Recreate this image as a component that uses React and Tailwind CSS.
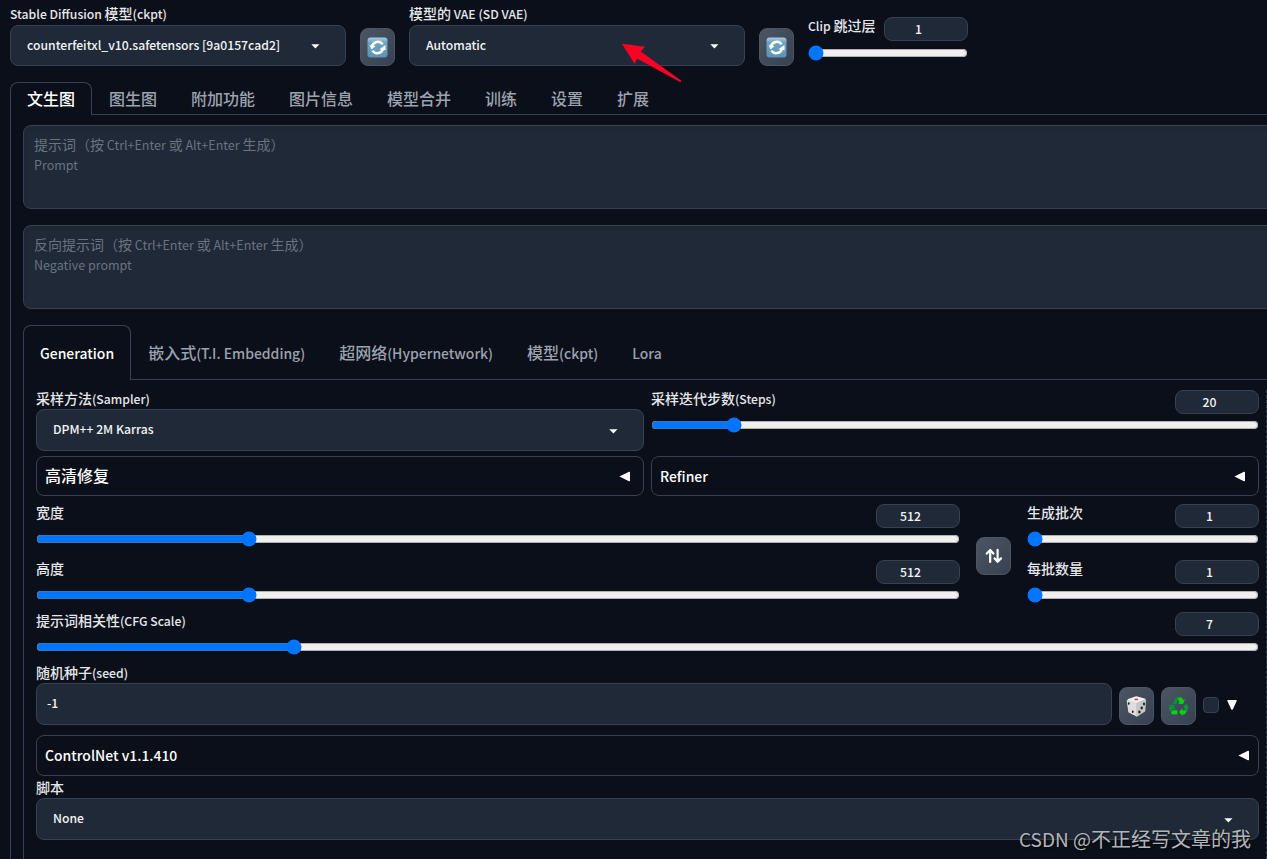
import React from "react";

// Latin runs are set slightly smaller than the surrounding Chinese glyphs.
function T({ children, latin = "text-[0.872em]" }) {
  return String(children)
    .split(/([\x20-\x7e]+)/)
    .filter(Boolean)
    .map((part, i) =>
      /^[\x20-\x7e]+$/.test(part) ? (
        <span key={i} className={"leading-none " + latin}>{part}</span>
      ) : (
        <React.Fragment key={i}>{part}</React.Fragment>
      )
    );
}

function Label({ children, className = "" }) {
  return (
    <div className={"text-[14px] leading-5 font-medium text-[#e5e7eb] whitespace-pre " + className}>
      <span className="relative -top-px"><T>{children}</T></span>
    </div>
  );
}

function Caret() {
  return (
    <svg width="9" height="5" viewBox="0 0 9 5" className="relative top-px shrink-0">
      <path d="M0.3 0.2h8.2L4.4 4.6z" fill="#fff" />
    </svg>
  );
}

function Select({ value, className = "" }) {
  return (
    <div className={"flex items-center justify-between rounded-lg border border-[#374151] bg-[#1f2937] pl-4 pr-[25px] text-[14px] font-medium text-[#f3f4f6] " + className}>
      <span className="relative -top-[2px] leading-5"><T>{value}</T></span>
      <Caret />
    </div>
  );
}

function ToolButton({ children, className = "" }) {
  return (
    <button className={"flex h-[38px] w-[35px] shrink-0 items-center justify-center rounded-lg border border-[#4b5563] bg-linear-to-br from-[#4b5563] to-[#374151] " + className}>
      {children}
    </button>
  );
}

function RefreshIcon() {
  return (
    <svg width="21" height="21" viewBox="0 0 21 21">
      <defs>
        <linearGradient id="refreshBg" x1="0" y1="0" x2="0" y2="1">
          <stop offset="0" stopColor="#a9cde0" />
          <stop offset="0.25" stopColor="#6fa3c2" />
          <stop offset="1" stopColor="#5b93b8" />
        </linearGradient>
      </defs>
      <rect x="0.5" y="0.5" width="20" height="20" rx="3" fill="url(#refreshBg)" />
      <path d="M5 9.4A5.9 5.9 0 0 1 15.6 7.4" fill="none" stroke="#fff" strokeWidth="2.5" />
      <path d="M16 11.6A5.9 5.9 0 0 1 5.4 13.6" fill="none" stroke="#fff" strokeWidth="2.5" />
      <path d="M2.6 8.2L8.6 8.9L4.6 12.4z" fill="#fff" />
      <path d="M18.6 13.2L12.4 12.3L18.4 8z" fill="#fff" />
    </svg>
  );
}

function DiceIcon() {
  return (
    <svg width="21" height="21" viewBox="0 0 21 21">
      <path d="M2.4 3.8L10.3 1L18.4 3.2L10.8 7z" fill="#f1f1f1" stroke="#f1f1f1" strokeWidth="1.6" strokeLinejoin="round" />
      <path d="M1.4 4.6L10.6 7.4L10.8 19.8L3 15.8z" fill="#dedede" stroke="#dedede" strokeWidth="1.4" strokeLinejoin="round" />
      <path d="M10.8 7.4L19.4 4L18.6 15L11 19.8z" fill="#c6c6c6" stroke="#c6c6c6" strokeWidth="1.4" strokeLinejoin="round" />
      <ellipse cx="10.3" cy="3.4" rx="2" ry="0.9" fill="#e0474c" />
      <ellipse cx="2.8" cy="7.5" rx="0.9" ry="1.3" fill="#222" />
      <ellipse cx="6.8" cy="15.8" rx="0.9" ry="1.3" fill="#222" />
      <ellipse cx="13.4" cy="16" rx="1.2" ry="1.4" fill="#222" />
      <ellipse cx="15.7" cy="12" rx="1.2" ry="1.4" fill="#222" />
      <ellipse cx="18" cy="8" rx="1.1" ry="1.4" fill="#222" />
    </svg>
  );
}

function RecycleIcon() {
  return (
    <svg width="21" height="19" viewBox="0 0 21 19">
      <path d="M4.6 6.4L7.6 1.2Q8 0.6 8.8 0.6H11.4L8.2 7.6z" fill="#0a8f3a" />
      <path d="M9.6 0.6H13Q13.8 0.6 14.2 1.3L15.2 3L17 2.2L14.8 7.2L9.8 6.6L11.4 5.5z" fill="#0cd010" />
      <path d="M15.4 9.2L18.8 7L20.3 10.2Q20.6 11 20.2 11.8L18.6 14.4L15.4 13.4L17 11.8z" fill="#0a9a36" />
      <path d="M18.6 14.6L17.4 16.6Q17 17.4 16 17.4H14.4V19L11 15L14.4 11.2V13.2L17 13.4z" fill="#0cd010" />
      <path d="M0.6 8.2L5.8 7.6L7.8 12.4L6 11.6L5 13.4L2.4 14.6L0.8 11.8Q0.4 11 0.9 10.2L2 9z" fill="#0a8f3a" />
      <path d="M3 15L5.2 13.3H9.4V17.4H4.8Q3.9 17.4 3.4 16.6z" fill="#0cd010" />
    </svg>
  );
}

function SwapIcon() {
  return (
    <svg width="18" height="16" viewBox="0 0 18 16" fill="none" stroke="#fff" strokeWidth="2.2" strokeLinecap="round" strokeLinejoin="round">
      <path d="M5.2 14V2.4M1.8 5.6L5.2 2L8.4 5.6" />
      <path d="M12.6 1.8V13.4M9.6 10.4L12.6 13.8L16 10.4" />
    </svg>
  );
}

function NumberBox({ value }) {
  return (
    <div className="flex h-6 w-[84px] shrink-0 items-center justify-center rounded-lg border border-[#374151] bg-[#1f2937] pr-[15px] text-[14px] leading-5 font-medium text-[#f3f4f6]">
      <T>{value}</T>
    </div>
  );
}

function Range({ min, max, value, className = "" }) {
  return <input type="range" min={min} max={max} defaultValue={value} className={"block h-4 w-full accent-[#0075ff] " + className} />;
}

function Slider({ label, className = "", ...range }) {
  return (
    <div className={"flex flex-col " + className}>
      <div className="flex justify-between">
        <Label className="-mt-px">{label}</Label>
        <NumberBox value={range.value} />
      </div>
      <Range {...range} className="mt-[3px]" />
    </div>
  );
}

function Accordion({ title, className = "" }) {
  return (
    <div className={"flex items-center justify-between rounded-lg border border-[#374151] pl-2 text-[16px] leading-6 font-medium text-white " + className}>
      <span className="relative -top-px"><T>{title}</T></span>
      <svg width="11" height="11" viewBox="0 0 11 11">
        <path d="M0.4 5.5L10 0.8Q11 0.5 11 1.4V9.6Q11 10.5 10 10.2z" fill="#fff" />
      </svg>
    </div>
  );
}

function Tabs({ items, height }) {
  return (
    <div className={"flex text-[16px] leading-6 font-medium text-[#9ca3af] " + height}>
      {items.map((t, i) => (
        <div
          key={t}
          className={
            i === 0
              ? "flex items-center rounded-t-lg border border-b-0 border-[#374151] px-4 pb-[2px] text-white"
              : "flex items-center border-b border-b-[#374151] px-[17px]"
          }
        >
          <span className="whitespace-nowrap"><T>{t}</T></span>
        </div>
      ))}
      <div className="flex-1 border-b border-[#374151]" />
    </div>
  );
}

function Prompt({ hint, title, className = "" }) {
  return (
    <div className={"h-[84px] w-[1300px] rounded-lg border border-[#374151] bg-[#1f2937] px-[10px] pt-[8px] text-[14px] leading-5 text-[#6b7280] shadow-[inset_0_2px_4px_rgba(0,0,0,0.08)] " + className}>
      <div><T latin="text-[0.895em]">{hint}</T></div>
      <div><T latin="text-[0.895em]">{title}</T></div>
    </div>
  );
}

export default function App() {
  return (
    <div className='relative h-[859px] w-[1267px] overflow-hidden bg-[#0b0f19] font-["Noto_Sans_CJK_SC","Noto_Sans",sans-serif]'>
      <header className="flex h-[82px] pl-[10px]">
        <div className="w-[336px]">
          <Label className="h-[25px] pt-1">Stable Diffusion 模型(ckpt)</Label>
          <Select value="counterfeitxl_v10.safetensors [9a0157cad2]" className="h-[41px]" />
        </div>
        <ToolButton className="mt-7 ml-[14px]"><RefreshIcon /></ToolButton>
        <div className="ml-[14px] w-[336px]">
          <Label className="h-[25px] pt-1">模型的 VAE (SD VAE)</Label>
          <Select value="Automatic" className="h-[41px]" />
        </div>
        <ToolButton className="mt-7 ml-[14px]"><RefreshIcon /></ToolButton>
        <div className="ml-[14px] w-[160px] pt-[17px]">
          <Slider label="Clip 跳过层" min={1} max={12} value={1} className="[&>input]:mt-[4px]" />
        </div>
      </header>

      <main className="pl-[10px]">
        <Tabs height="h-[33px]" items={["文生图", "图生图", "附加功能", "图片信息", "模型合并", "训练", "设置", "扩展"]} />
        <div className="h-[744px] border-l border-[#374151] pt-[10px] pl-3">
          <Prompt hint="提示词（按 Ctrl+Enter 或 Alt+Enter 生成）" title="Prompt" />
          <Prompt hint="反向提示词（按 Ctrl+Enter 或 Alt+Enter 生成）" title="Negative prompt" className="mt-4" />

          <div className="mt-4">
            <Tabs height="h-[55px]" items={["Generation", "嵌入式(T.I. Embedding)", "超网络(Hypernetwork)", "模型(ckpt)", "Lora"]} />
            <div className="flex h-[479px] border-l border-[#374151] pt-[10px] pl-3">
              <div className="w-[1223px] shrink-0">
                <div className="flex h-[66px] gap-[7px]">
                  <div className="w-[608px]">
                    <Label className="-mt-px h-5">采样方法(Sampler)</Label>
                    <Select value="DPM++ 2M Karras" className="h-[42px]" />
                  </div>
                  <Slider label="采样迭代步数(Steps)" min={1} max={150} value={20} className="w-[608px]" />
                </div>

                <div className="flex gap-[7px]">
                  <Accordion title="高清修复" className="h-10 w-[608px] pr-[13px]" />
                  <Accordion title="Refiner" className="h-10 w-[608px] pr-[13px]" />
                </div>

                <div className="mt-2 flex h-[108px]">
                  <div className="flex w-[924px] flex-col gap-[13px]">
                    <Slider label="宽度" min={64} max={2048} value={512} />
                    <Slider label="高度" min={64} max={2048} value={512} />
                  </div>
                  <ToolButton className="mt-[33px] ml-4"><SwapIcon /></ToolButton>
                  <div className="ml-4 flex w-[232px] flex-col gap-[13px]">
                    <Slider label="生成批次" min={1} max={100} value={1} />
                    <Slider label="每批数量" min={1} max={8} value={1} />
                  </div>
                </div>

                <Slider label="提示词相关性(CFG Scale)" min={1} max={30} value={7} />

                <div className="mt-2 flex h-[62px]">
                  <div className="w-[1076px]">
                    <Label className="h-5">随机种子(seed)</Label>
                    <div className="flex h-[42px] items-center rounded-lg border border-[#374151] bg-[#1f2937] px-[10px] pb-px text-[14px] leading-5 font-medium text-[#f3f4f6]">
                      <T>-1</T>
                    </div>
                  </div>
                  <ToolButton className="mt-6 ml-[7px]"><DiceIcon /></ToolButton>
                  <ToolButton className="mt-6 ml-[7px]"><RecycleIcon /></ToolButton>
                  <div className="mt-[34px] ml-[7px] size-4 rounded border border-[#374151] bg-[#1f2937]" />
                  <svg width="10" height="10" viewBox="0 0 10 10" className="mt-[37px] ml-2">
                    <path d="M0.4 1Q0 0 1 0H9Q10 0 9.7 1L5.9 9.2Q5 10.4 4.2 9.2z" fill="#fff" />
                  </svg>
                </div>

                <Accordion title="ControlNet v1.1.410" className="mt-[10px] h-[41px] pr-[9px] pb-px" />

                <Label className="mt-[2px] h-5">脚本</Label>
                <Select value="None" className="h-[42px]" />
              </div>
              <div className="ml-[7px] border-l border-dashed border-[#374151]" />
            </div>
          </div>
        </div>
      </main>

      <svg width="62" height="42" viewBox="0 0 62 42" className="absolute left-[621px] top-[42px]">
        <path d="M1 1.7L24.3 4.7L19.5 9.3L60 38.6Q60.6 40.4 59 40L16 16.5L13.7 22z" fill="#ff0023" />
      </svg>

      <div className="absolute right-[16px] bottom-[5px] text-[20px] leading-[30px] whitespace-nowrap text-[#b4b5b8] [text-shadow:1px_1px_2px_rgba(0,0,0,0.7)]">
        <T latin="text-[0.95em]">CSDN @不正经写文章的我</T>
      </div>
    </div>
  );
}
